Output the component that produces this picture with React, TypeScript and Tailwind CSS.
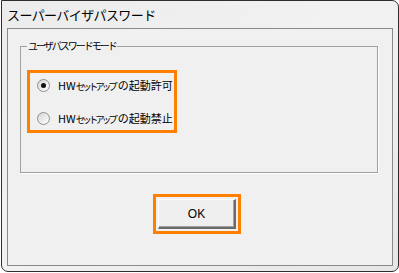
import React from "react";

const jp = "font-['Noto_Sans_CJK_JP','Noto_Sans',sans-serif]";

function Radio({ checked, tail }: { checked?: boolean; tail: string }) {
  return (
    <label className="flex items-center gap-[8px] h-[13px]">
      <span className="w-[13px] h-[13px] rounded-full border border-[#8e8f8f] bg-gradient-to-br from-[#d6d6d6] to-[#ffffff] flex items-center justify-center shrink-0">
        {checked && <span className="w-[5px] h-[5px] rounded-full bg-[#111]" />}
      </span>
      <span className={`${jp} text-[11px] leading-[13px] text-black whitespace-nowrap`}>
        HW<span className="text-[9.5px] tracking-[-3px] mr-[3px]">セットアップ</span>{tail}
      </span>
    </label>
  );
}

export default function App() {
  return (
    <div className="w-[399px] h-[273px] bg-white overflow-hidden">
      <div className="ml-[1px] w-[398px] h-[272px] border border-[#2e2e2e] rounded-tr-[7px] rounded-b-[7px] bg-gradient-to-br from-[#ececec] via-[#f2f2f2] to-[#e6e6e6] flex flex-col">
        {/* title bar */}
        <div className="h-[27px] flex items-center pl-[5px]">
          <span className={`${jp} text-[13px] tracking-[-0.6px] text-black leading-none`}>
            スーパーバイザパスワード
          </span>
        </div>

        {/* client area */}
        <div className="mx-[5px] mb-[5px] flex-1 border border-[#8a8a8a] bg-[#f0f0f0] flex flex-col">
          <fieldset className="ml-[12px] mt-[11px] w-[358px] h-[133px] border border-[#a0a0a0] shadow-[1px_1px_0_#ffffff]">
            <legend className={`${jp} ml-[6px] px-[1px] text-[10px] tracking-[-2px] leading-[12px] text-black`}>
              ユーザパスワードモード
            </legend>
            <div className="ml-[6px] mt-[18px] w-[150px] h-[63px] border-[3px] border-[#ff8000] flex flex-col gap-[20px] pl-[7px] pt-[6px]">
              <Radio checked tail="の起動許可" />
              <Radio tail="の起動禁止" />
            </div>
          </fieldset>

          <div className="flex justify-center pr-[6px] mt-[21px]">
            <div className="w-[88px] h-[40px] border-[3px] border-[#ff8000] p-[2px]">
              <button className="w-full h-full bg-[#efefef] border-t border-l border-t-white border-l-white border-r-2 border-b-2 border-r-[#6b6b6b] border-b-[#6b6b6b] shadow-[inset_-1px_-1px_0_#a0a0a0] flex items-center justify-center">
                <span className="font-['Liberation_Sans',sans-serif] text-[12px] text-black leading-none">OK</span>
              </button>
            </div>
          </div>
        </div>
      </div>
    </div>
  );
}
